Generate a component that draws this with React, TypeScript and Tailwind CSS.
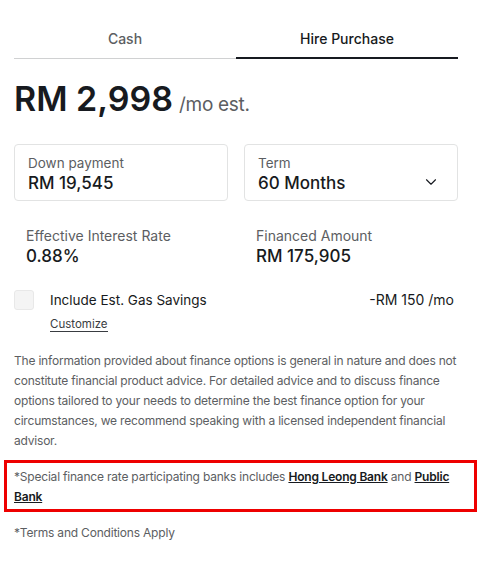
import { ChevronDown } from 'lucide-react'

const App = () => {
    return (
        <div className="w-[488px] h-[578px] bg-white text-[#171a20] font-['Inter',sans-serif]">
            <div className="px-[14px] pt-[29px] w-[472px]">
                {/* tabs */}
                <div className="grid grid-cols-2 text-[14px] font-medium leading-[20px]">
                    <div className="h-[30px] flex justify-center items-start text-[#5c5e62] border-b border-[#d0d1d2]">Cash</div>
                    <div className="h-[30px] flex justify-center items-start border-b-2 border-[#171a20]">Hire Purchase</div>
                </div>

                <div className="mt-[20px] flex items-baseline gap-[6px]">
                    <span className="text-[34px] font-semibold leading-[40px]">RM 2,998</span>
                    <span className="text-[19px] text-[#5c5e62] tracking-[-0.3px]">/mo est.</span>
                </div>

                <div className="mt-[24px] grid grid-cols-2 gap-[16px] w-[444px]">
                    <div className="border border-[#e2e3e3] rounded-[4px] h-[57px] px-[13px] pt-[9px]">
                        <div className="text-[13.5px] text-[#5c5e62] leading-[18px]">Down payment</div>
                        <div className="text-[17px] font-medium leading-[23px]">RM 19,545</div>
                    </div>
                    <div className="border border-[#e2e3e3] rounded-[4px] h-[57px] px-[13px] pt-[9px] flex items-center justify-between">
                        <div className="self-start">
                            <div className="text-[13.5px] text-[#5c5e62] leading-[18px]">Term</div>
                            <div className="text-[17px] font-medium leading-[23px]">60 Months</div>
                        </div>
                        <ChevronDown size={18} strokeWidth={1.5} className="mt-[10px] mr-[4px]" />
                    </div>
                </div>

                <div className="mt-[25px] grid grid-cols-2 gap-[16px] w-[444px]">
                    <div className="px-[12px]">
                        <div className="text-[14px] text-[#5c5e62] leading-[19px]">Effective Interest Rate</div>
                        <div className="text-[17px] font-medium leading-[23px]">0.88%</div>
                    </div>
                    <div className="px-[12px]">
                        <div className="text-[14px] text-[#5c5e62] leading-[19px]">Financed Amount</div>
                        <div className="text-[17px] font-medium leading-[23px]">RM 175,905</div>
                    </div>
                </div>

                <div className="mt-[22px] flex w-[444px]">
                    <div className="w-[20px] h-[20px] rounded-[3px] bg-[#f4f4f4] border border-[#e8e8e8]"></div>
                    <div className="ml-[16px] flex-1">
                        <div className="flex justify-between text-[14px] leading-[20px]">
                            <span className="text-[13.5px]">Include Est. Gas Savings</span>
                            <span className="mr-[4px]">-RM 150 /mo</span>
                        </div>
                        <span className="inline-block text-[11.5px] leading-[14px] text-[#393c41] border-b border-[#393c41]">Customize</span>
                    </div>
                </div>

                <p className="mt-[17px] text-[12px] leading-[20px] tracking-[-0.2px] text-[#5c5e62] w-[450px]">
                    The information provided about finance options is general in nature and does not constitute financial product advice. For detailed advice and to discuss finance options tailored to your needs to determine the best finance option for your circumstances, we recommend speaking with a licensed independent financial advisor.
                </p>

                <div className="mt-[9px] -ml-[10px] w-[473px] border-[3px] border-[#ee0000] pl-[7px] pr-[10px] pt-[4px] pb-[2px]">
                    <p className="text-[12px] leading-[20px] tracking-[-0.2px] text-[#5c5e62]">
                        *Special finance rate participating banks includes <a className="font-semibold text-[#171a20] underline">Hong Leong Bank</a> and <a className="font-semibold text-[#171a20] underline">Public Bank</a>
                    </p>
                </div>

                <p className="mt-[11px] text-[12px] leading-[20px] tracking-[-0.2px] text-[#5c5e62]">*Terms and Conditions Apply</p>
            </div>
        </div>
    )
}

export default App
